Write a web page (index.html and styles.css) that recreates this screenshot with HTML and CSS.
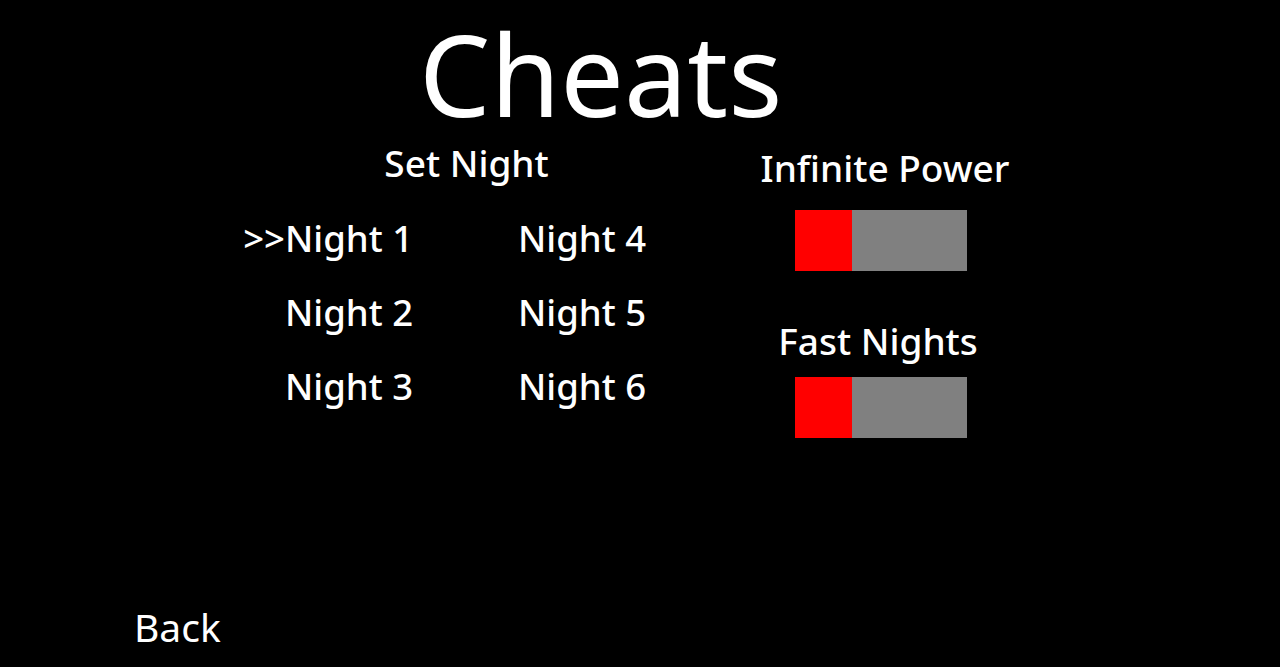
FILE: index.html
```html
<!DOCTYPE html>
<html>
<head>
<meta charset="utf-8">
<link rel="stylesheet" href="styles.css">
</head>
<body>
<div class="screen">
  <h1 class="title">Cheats</h1>
  <div class="main">
    <section class="nights">
      <h2 class="heading">Set Night</h2>
      <div class="night-grid">
        <div class="night selected">Night 1</div>
        <div class="night">Night 4</div>
        <div class="night">Night 2</div>
        <div class="night">Night 5</div>
        <div class="night">Night 3</div>
        <div class="night">Night 6</div>
      </div>
    </section>
    <section class="options">
      <div class="option">
        <div class="option-label label-power">Infinite Power</div>
        <div class="toggle"><span class="toggle-on"></span><span class="toggle-off"></span></div>
      </div>
      <div class="option option-second">
        <div class="option-label label-fast">Fast Nights</div>
        <div class="toggle"><span class="toggle-on"></span><span class="toggle-off"></span></div>
      </div>
    </section>
  </div>
  <div class="back">Back</div>
</div>
</body>
</html>
```
FILE: styles.css
```css
html, body {
  margin: 0;
  padding: 0;
  background: #000;
}
body {
  font-family: "Noto Sans", "Open Sans", sans-serif;
  color: #fff;
}
.screen {
  height: 667px;
  display: flex;
  flex-direction: column;
  box-sizing: border-box;
  padding-bottom: 21px;
}
.title {
  margin: 0;
  padding-top: 5px;
  padding-left: 419px;
  font-size: 113px;
  line-height: 137px;
  font-weight: 400;
}
.main {
  flex: 1;
  display: flex;
  align-items: flex-start;
  padding-left: 285px;
}
.nights {
  width: 363px;
  margin-top: 2px;
  display: flex;
  flex-direction: column;
  align-items: center;
}
.heading {
  margin: 0;
  font-size: 37px;
  line-height: 37px;
  font-weight: 500;
}
.night-grid {
  margin-top: 39px;
  display: grid;
  grid-template-columns: 233px 130px;
  row-gap: 38px;
}
.night {
  font-size: 36.5px;
  line-height: 36px;
  font-weight: 500;
  position: relative;
  white-space: nowrap;
}
.night.selected::before {
  content: ">>";
  position: absolute;
  right: 100%;
  top: 0;
}
.options {
  width: 300px;
  margin-left: 83px;
  margin-top: 7px;
  display: flex;
  flex-direction: column;
  align-items: center;
}
.option {
  display: flex;
  flex-direction: column;
  align-items: center;
}
.option-label {
  font-size: 37px;
  line-height: 37px;
  font-weight: 500;
  white-space: nowrap;
}
.label-power {
  padding-left: 8px;
}
.label-fast {
  padding-right: 6px;
}
.toggle {
  display: flex;
  width: 172px;
  height: 61px;
  margin-top: 24px;
}
.option-second {
  margin-top: 51px;
}
.option-second .toggle {
  margin-top: 18px;
}
.toggle-on {
  width: 57px;
  background: #ff0000;
}
.toggle-off {
  flex: 1;
  background: #808080;
}
.back {
  padding-left: 134px;
  font-size: 39px;
  line-height: 39px;
  font-weight: 400;
}
```
